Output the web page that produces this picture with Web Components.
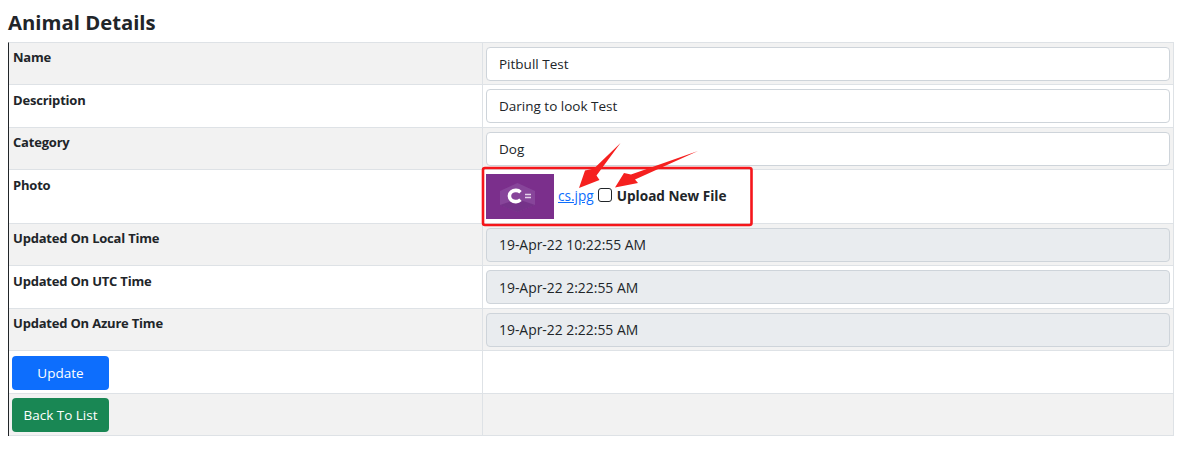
<!DOCTYPE html>
<html>
<head>
<meta charset="utf-8">
<style>
  html, body { margin: 0; background: #fff; }
  body { padding: 0 8px; font-family: "Open Sans", "Noto Sans", sans-serif; color: #212529; font-size: 14px; }
</style>
</head>
<body>
<animal-details></animal-details>
<script>
const baseFont = `font-family: "Open Sans", "Noto Sans", sans-serif;`;

class DetailRow extends HTMLElement {
  constructor() {
    super();
    this.attachShadow({ mode: 'open' });
    this.shadowRoot.innerHTML = `
      <style>
        :host { display: grid; grid-template-columns: 474px 1fr; border-bottom: 1px solid #dee2e6; box-sizing: border-box; }
        :host([striped]) { background: #f2f2f2; }
        .label { padding: 4.3px 4px 4px; font-weight: 700; font-size: 13px; letter-spacing: -.2px; line-height: 21px; border-right: 1px solid #dee2e6; }
        .value { padding: 3px 3px 3px; min-width: 0; display: flex; align-items: center; }
      </style>
      <div class="label"><slot name="label"></slot></div>
      <div class="value"><slot></slot></div>
    `;
  }
}

class DetailField extends HTMLElement {
  constructor() {
    super();
    this.attachShadow({ mode: 'open' });
    const dis = this.hasAttribute('disabled');
    this.shadowRoot.innerHTML = `
      <style>
        :host { display: block; flex: 1; }
        input {
          display: block; width: 100%; height: 34px; box-sizing: border-box;
          padding: 0 12px; border: 1px solid #ced4da; border-radius: 4px;
          background: #fff; color: #212529; font: 13.5px "Open Sans", "Noto Sans", sans-serif; outline: none;
        }
        input:disabled { background: #e9ecef; opacity: 1; font-size: 13.9px; }
      </style>
      <input type="text" ${dis ? 'disabled' : ''}>
    `;
    this.shadowRoot.querySelector('input').value = this.getAttribute('value') || '';
  }
}

class ActionButton extends HTMLElement {
  constructor() {
    super();
    this.attachShadow({ mode: 'open' });
    this.shadowRoot.innerHTML = `
      <style>
        :host { display: block; width: 97px; height: 34px; margin-left: -1px; border-radius: 4px; background: var(--bg, #0d6efd); color: #fff;
          font: 13.5px "Open Sans", "Noto Sans", sans-serif; letter-spacing: 0; text-align: center; line-height: 34px; }
      </style>
      <slot></slot>
    `;
  }
}

class PhotoPicker extends HTMLElement {
  constructor() {
    super();
    this.attachShadow({ mode: 'open' });
    this.shadowRoot.innerHTML = `
      <style>
        :host { display: flex; align-items: center; ${baseFont} font-size: 13.6px; }
        svg { display: block; }
        a { color: #0d6efd; text-decoration: underline; margin: 0 4px 3px; }
        .check { width: 12px; height: 12px; border: 1px solid #212529; border-radius: 3px; background: #fff; margin: 0 5px 3px 0; }
        b { font-size: 13.6px; margin-bottom: 3px; }
      </style>
      <svg width="68" height="45" viewBox="0 0 68 45">
        <defs><filter id="soft"><feGaussianBlur stdDeviation="0.55"/></filter></defs>
        <rect width="68" height="45" fill="#7b2f8c"/>
        <g filter="url(#soft)">
          <path d="M31.5 9 L49 17 V31 L31.5 38 L14 31 V17 Z" fill="#87459a"/>
          <path d="M14 31 L31.5 38 L49 31 L31.5 25 Z" fill="#632277" opacity=".5"/>
          <path d="M34.5 18.2 A6.4 5.6 0 1 0 34.5 25.8" fill="none" stroke="#fff" stroke-width="3.6"/>
          <path d="M39 20.5 h6 M39 23.5 h6" stroke="#e4d2ea" stroke-width="1.3"/>
        </g>
      </svg>
      <a href="#">cs.jpg</a>
      <span class="check"></span>
      <b>Upload New File</b>
    `;
  }
}

class MarkupOverlay extends HTMLElement {
  constructor() {
    super();
    this.attachShadow({ mode: 'open' });
    this.shadowRoot.innerHTML = `
      <style>
        :host { position: absolute; left: 0; top: 0; width: 1190px; height: 456px; pointer-events: none; display: block; }
        svg { display: block; }
      </style>
      <svg width="1190" height="456" viewBox="0 0 1190 456">
        <rect x="483" y="168" width="268.5" height="57" rx="2" fill="none" stroke="#f5161b" stroke-width="2.6"/>
        <path d="M620.5 143 L594 168.5 L585 170.5 L579 188 L599.5 180 L596.5 175.5 Z" fill="#f5201f"/>
        <path d="M698 151 L631 174.5 L624 173 L615 187.5 L638 183 L635 179.5 Z" fill="#f5201f"/>
      </svg>
    `;
  }
}

class AnimalDetails extends HTMLElement {
  constructor() {
    super();
    this.attachShadow({ mode: 'open' });
    this.shadowRoot.innerHTML = `
      <style>
        :host { display: block; width: 1166px; ${baseFont} color: #212529; font-size: 14px; }
        h2 { margin: 0; padding-top: 8px; height: 42px; box-sizing: border-box; font-size: 20.3px; line-height: 28px; font-weight: 700; }
        .rows { border-left: 1px solid #212529; border-top: 1px solid #dee2e6; border-right: 1px solid #dee2e6; }
        .h43 { height: 42.45px; }
        .photo { height: 53.6px; }
      </style>
      <h2>Animal Details</h2>
      <div class="rows">
        <detail-row striped class="h43"><span slot="label">Name</span><detail-field value="Pitbull Test"></detail-field></detail-row>
        <detail-row class="h43"><span slot="label">Description</span><detail-field value="Daring to look Test"></detail-field></detail-row>
        <detail-row striped class="h43"><span slot="label">Category</span><detail-field value="Dog"></detail-field></detail-row>
        <detail-row class="photo"><span slot="label">Photo</span><photo-picker></photo-picker></detail-row>
        <detail-row striped class="h43"><span slot="label">Updated On Local Time</span><detail-field disabled value="19-Apr-22 10:22:55 AM"></detail-field></detail-row>
        <detail-row class="h43"><span slot="label">Updated On UTC Time</span><detail-field disabled value="19-Apr-22 2:22:55 AM"></detail-field></detail-row>
        <detail-row striped class="h43"><span slot="label">Updated On Azure Time</span><detail-field disabled value="19-Apr-22 2:22:55 AM"></detail-field></detail-row>
        <detail-row class="h43"><span slot="label"><action-button>Update</action-button></span></detail-row>
        <detail-row striped class="h43"><span slot="label"><action-button style="--bg:#198754">Back To List</action-button></span></detail-row>
      </div>
      <markup-overlay></markup-overlay>
    `;
  }
}

customElements.define('detail-row', DetailRow);
customElements.define('detail-field', DetailField);
customElements.define('action-button', ActionButton);
customElements.define('photo-picker', PhotoPicker);
customElements.define('markup-overlay', MarkupOverlay);
customElements.define('animal-details', AnimalDetails);
</script>
</body>
</html>
